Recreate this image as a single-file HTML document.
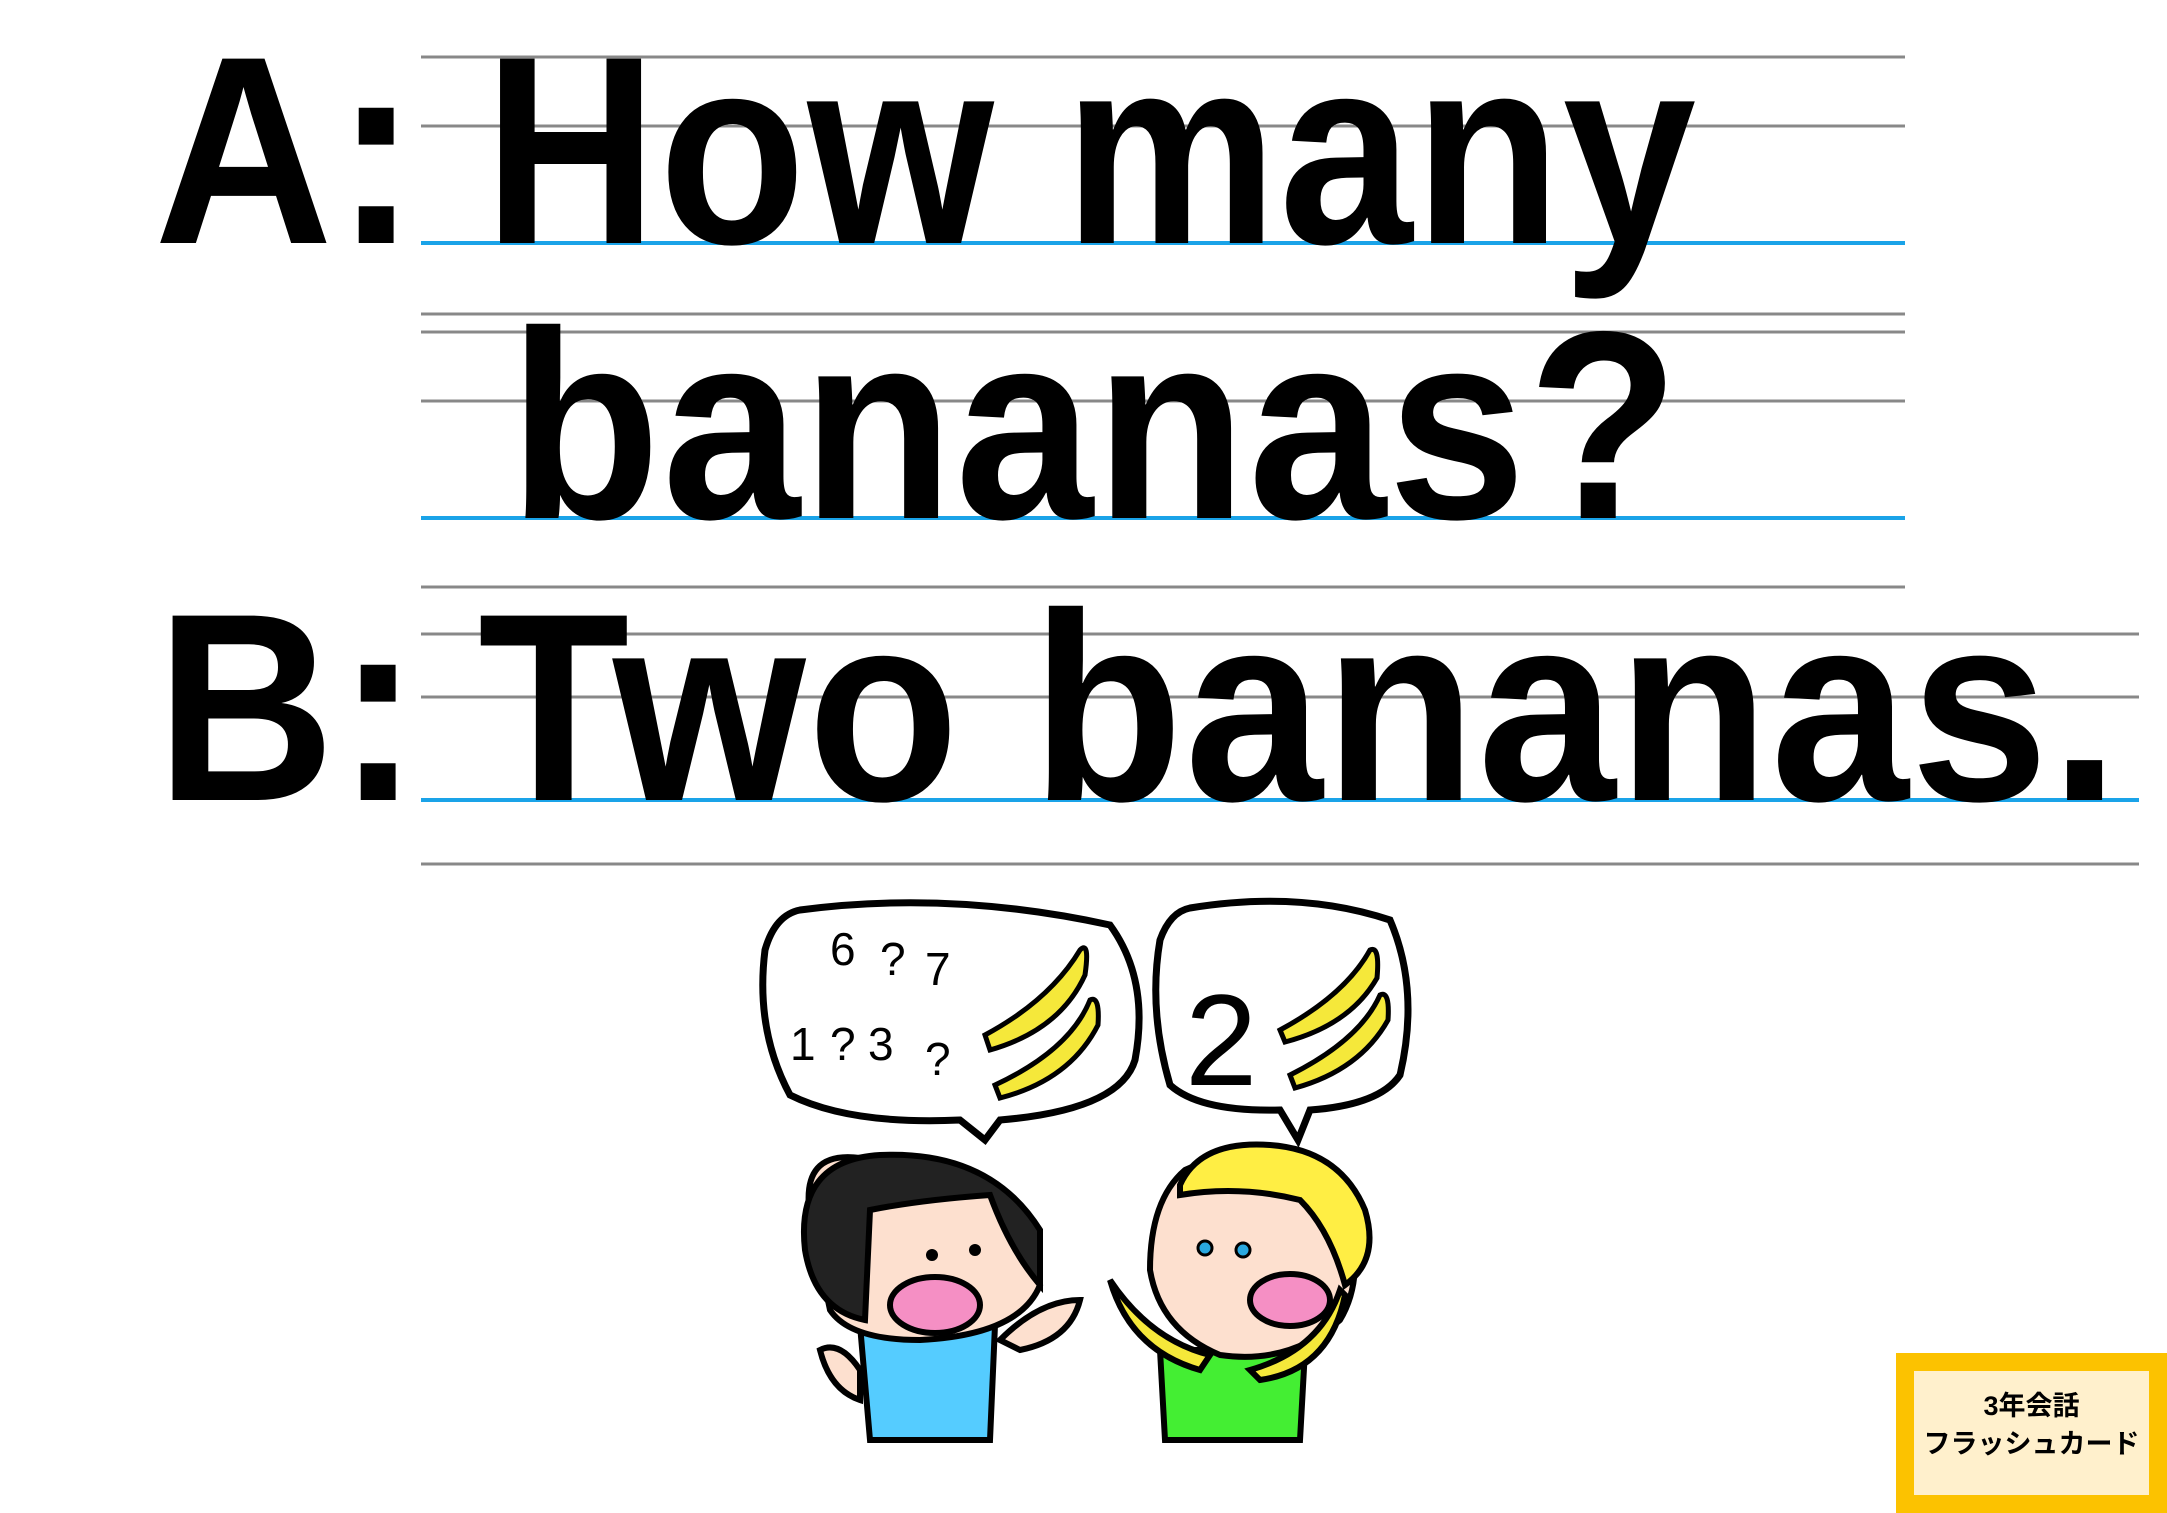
<!DOCTYPE html>
<html><head><meta charset="utf-8"><style>
html,body{margin:0;padding:0;background:#fff;}
body{width:2167px;height:1500px;position:relative;overflow:hidden;font-family:"Liberation Sans",sans-serif;}
.t{position:absolute;font-weight:bold;font-size:268px;line-height:1;color:#000;white-space:nowrap;letter-spacing:2px;transform:scaleX(0.925);transform-origin:0 0;}
.badge{position:absolute;left:1896px;top:1353px;width:235px;height:108px;border:18px solid #fcc200;background:#fff0cc;text-align:center;font-family:"Liberation Sans","Noto Sans CJK JP",sans-serif;font-weight:bold;font-size:27px;line-height:38px;padding-top:16px;box-sizing:content-box;}
</style></head><body>
<svg width="2167" height="1500" style="position:absolute;left:0;top:0">
<g stroke="#888" stroke-width="3">
<line x1="421" y1="57" x2="1905" y2="57"/><line x1="421" y1="126" x2="1905" y2="126"/>
<line x1="421" y1="314" x2="1905" y2="314"/><line x1="421" y1="332" x2="1905" y2="332"/>
<line x1="421" y1="401" x2="1905" y2="401"/><line x1="421" y1="587" x2="1905" y2="587"/>
<line x1="421" y1="634" x2="2139" y2="634"/><line x1="421" y1="697" x2="2139" y2="697"/>
<line x1="421" y1="864" x2="2139" y2="864"/>
</g>
<g stroke="#1aa3e8" stroke-width="4">
<line x1="421" y1="243" x2="1905" y2="243"/><line x1="421" y1="518" x2="1905" y2="518"/><line x1="421" y1="800" x2="2139" y2="800"/>
</g>
<g fill="#fff" stroke="#000" stroke-width="7">
<path d="M800 910 Q950 890 1110 925 Q1150 980 1135 1060 Q1120 1110 1000 1120 L985 1140 L960 1120 Q850 1125 790 1095 Q755 1030 765 950 Q775 915 800 910Z"/>
<path d="M1190 908 Q1300 890 1390 920 Q1420 990 1400 1075 Q1380 1105 1310 1110 L1298 1140 L1280 1110 Q1200 1112 1170 1085 Q1148 1010 1160 940 Q1170 912 1190 908Z"/>
</g>
<g font-family="Liberation Sans" fill="#000" font-size="46">
<text x="830" y="965">6</text><text x="880" y="975">?</text><text x="925" y="985">7</text>
<text x="790" y="1060">1</text><text x="830" y="1060">?</text><text x="868" y="1060">3</text><text x="925" y="1075">?</text>
<text x="1185" y="1085" font-size="130">2</text>
</g>
<g fill="#f5e83a" stroke="#000" stroke-width="5">
<path d="M985 1035 Q1050 1000 1080 950 Q1090 940 1085 975 Q1060 1030 990 1050Z"/>
<path d="M995 1085 Q1070 1050 1090 1000 Q1100 995 1098 1025 Q1070 1080 1000 1098Z"/>
<path d="M1280 1030 Q1345 995 1370 950 Q1380 945 1377 978 Q1350 1025 1285 1042Z"/>
<path d="M1290 1075 Q1360 1040 1380 995 Q1390 990 1388 1020 Q1360 1070 1295 1088Z"/>
</g>
<g stroke="#000" stroke-width="6">
<path d="M860 1325 L870 1440 L990 1440 L995 1325Z" fill="#55ccff"/>
<path d="M810 1215 Q800 1150 860 1158 Q940 1150 1010 1200 L1040 1285 Q1020 1335 920 1340 Q850 1340 830 1310Z" fill="#fde0cf"/>
<path d="M805 1250 Q795 1160 880 1155 Q990 1150 1040 1230 L1040 1285 Q1010 1250 990 1195 Q920 1200 870 1210 L865 1320 Q815 1310 805 1250Z" fill="#222"/>
<ellipse cx="935" cy="1305" rx="45" ry="28" fill="#f58fc4"/>
<path d="M1000 1340 Q1040 1300 1080 1300 Q1070 1340 1020 1350Z" fill="#fde0cf"/>
<path d="M820 1350 Q840 1340 860 1370 L860 1400 Q830 1390 820 1350Z" fill="#fde0cf"/>
</g>
<g stroke="#000" stroke-width="6">
<path d="M1160 1350 L1165 1440 L1300 1440 L1305 1350Z" fill="#44ee33"/>
<path d="M1185 1170 Q1270 1130 1340 1190 Q1370 1270 1340 1320 Q1290 1365 1220 1355 Q1160 1330 1150 1270 Q1150 1200 1185 1170Z" fill="#fde0cf"/>
<path d="M1180 1185 Q1200 1140 1270 1145 Q1340 1150 1365 1210 Q1380 1260 1345 1285 Q1330 1230 1300 1200 Q1240 1185 1180 1195Z" fill="#ffee44"/>
<ellipse cx="1290" cy="1300" rx="40" ry="26" fill="#f58fc4"/>
<path d="M1110 1280 Q1150 1340 1210 1355 L1200 1370 Q1130 1350 1110 1280Z" fill="#f5e83a"/>
<path d="M1340 1290 Q1320 1350 1250 1370 L1260 1380 Q1330 1370 1345 1295Z" fill="#f5e83a"/>
</g>
<circle cx="1205" cy="1248" r="7" fill="#29a8e0" stroke="#000" stroke-width="3"/>
<circle cx="1243" cy="1250" r="7" fill="#29a8e0" stroke="#000" stroke-width="3"/>
<circle cx="932" cy="1255" r="6" fill="#000"/><circle cx="975" cy="1250" r="6" fill="#000"/>
</svg>
<div class="t" style="left:154px;top:16px">A:</div>
<div class="t" style="left:484px;top:16px;transform:scaleX(0.895)">How many</div>
<div class="t" style="left:509px;top:291px">bananas?</div>
<div class="t" style="left:156px;top:573px">B:</div>
<div class="t" style="left:478px;top:573px">Two bananas.</div>
<div class="badge">3年会話<br>フラッシュカード</div>
</body></html>
